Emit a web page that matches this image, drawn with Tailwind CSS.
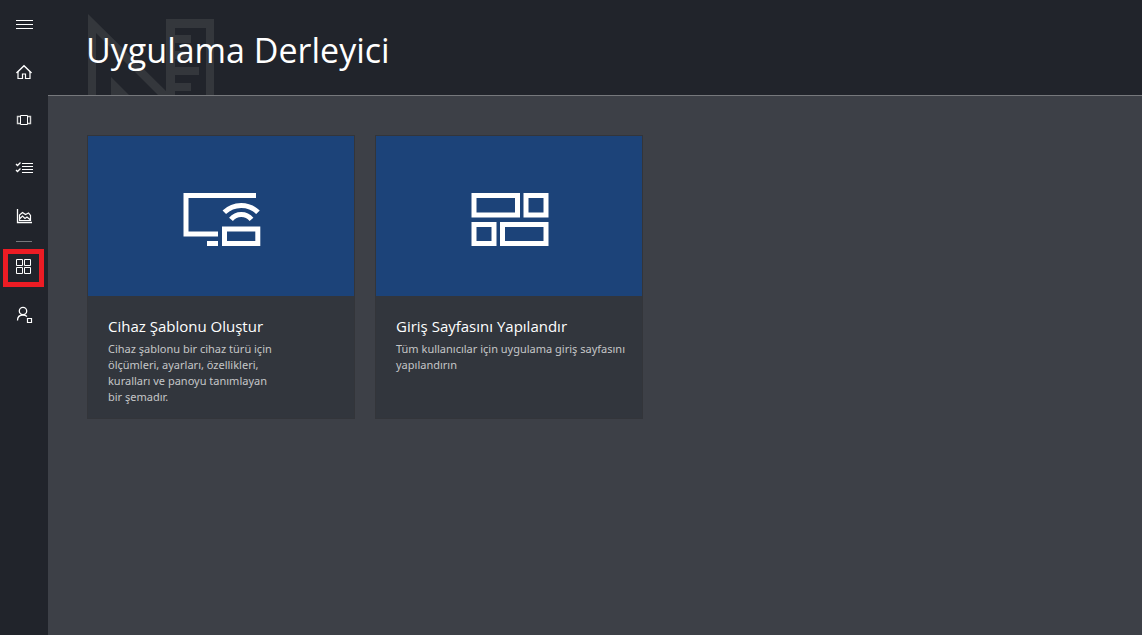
<!DOCTYPE html>
<html lang="tr">
<head>
<meta charset="utf-8">
<meta name="viewport" content="width=device-width, initial-scale=1">
<title>Uygulama Derleyici</title>
<script src="https://cdn.jsdelivr.net/npm/@tailwindcss/browser@4"></script>
</head>
<body class="flex min-h-screen bg-[#3d4047] font-['Open_Sans',sans-serif] text-white">
  <nav class="flex w-12 shrink-0 flex-col bg-[#21242b]" aria-label="Ana menü">
    <button type="button" aria-label="Menü" class="flex h-12 w-full items-center justify-center">
      <svg class="size-6" viewBox="0 0 24 24" fill="none" stroke="currentColor"><path d="M4 8.500h17M4 12.500h17M4 16.500h17"/></svg>
    </button>
    <a href="#" aria-label="Giriş" class="flex h-12 w-full items-center justify-center">
      <svg class="size-6" viewBox="0 0 24 24" fill="none" stroke="currentColor"><path d="M4.500 13 12 5.700l7.500 7.300" stroke-width="1.500"/><path d="M6 11.500v7h4.500v-4.500h3v4.500H18v-7" stroke-width="1.200"/></svg>
    </a>
    <a href="#" aria-label="Cihazlar" class="flex h-12 w-full items-center justify-center">
      <svg class="size-6" viewBox="0 0 24 24" fill="none" stroke="currentColor"><path d="M8.500 7.500h7v9h-7z"/><path d="M8 8.500H5.500v7H8M16 8.500h2.500v7H16" stroke="#d5d5d5" stroke-width="1.400"/></svg>
    </a>
    <a href="#" aria-label="Kurallar" class="flex h-12 w-full items-center justify-center">
      <svg class="size-6" viewBox="0 0 24 24" fill="none" stroke="currentColor"><path d="M10 7.500h11M10 10.500h11M10 13.500h11M10 16.500h11"/><path d="M4 8l1.500 1.500L8.500 6.500M4 14l1.500 1.500L8.500 12.500" stroke-width="1.300"/></svg>
    </a>
    <a href="#" aria-label="Analiz" class="flex h-12 w-full items-center justify-center">
      <svg class="size-6" viewBox="0 0 24 24" fill="none" stroke="currentColor"><path d="M5.500 5v13.500H20" stroke-width="1.300"/><path d="M7.500 16.500v-5.500l3-2.500 3 2 3-1.500 2 2.500v5zM7.500 15l3-3 2.500 2.500 2-1.500 3.500 3" stroke-width="1.200"/></svg>
    </a>
    <div class="flex h-[3px] items-center px-4"><div class="h-px w-full bg-[#76787c]"></div></div>
    <a href="#" aria-label="Uygulama Derleyici" aria-current="page" class="relative flex h-12 w-full items-center justify-center">
      <svg class="size-6" viewBox="0 0 24 24" fill="none" stroke="currentColor"><path d="M4.500 4.500h6v6h-6zM12.500 4.500h6v6h-6zM4.500 12.500h6v6h-6zM12.500 12.500h6v6h-6z"/></svg>
      <span class="absolute top-1.5 left-[3px] h-[38px] w-[41px] border-5 border-[#ed1c24]"></span>
    </a>
    <a href="#" aria-label="Yönetim" class="flex h-12 w-full items-center justify-center">
      <svg class="size-6" viewBox="0 0 24 24" fill="none" stroke="currentColor"><circle cx="11" cy="8" r="3.700" stroke-width="1.300"/><path d="M5.500 17.500c0-3.300 2.200-5.500 5.500-5.500 1.600 0 3 .5 4 1.500" stroke-width="1.300"/><path d="M15.500 15.500h4v4h-4z" stroke-width="1.200"/></svg>
    </a>
  </nav>
  <div class="flex min-w-0 grow flex-col">
    <header class="relative h-24 border-b border-[#76787c] bg-[#21242b] px-[38px] pt-5">
      <svg class="absolute bottom-0 left-10 h-[81px] w-[127px]" viewBox="0 0 127 81" fill="#34373c" aria-hidden="true">
        <path fill-rule="evenodd" d="M0 0 78 77V5h48v76H118V14H87v7h16v8H87v8h16v8H87v8h24v8H87v8h16v8H87v4H70L8 19v62H0z"/>
        <path d="M23 63v18h18z"/>
      </svg>
      <h1 class="relative text-[34px] leading-[60px]">Uygulama Derleyici</h1>
    </header>
    <main class="flex flex-wrap items-stretch gap-5 px-[39px] py-[39px]">
      <a href="#" class="flex w-[268px] flex-col border border-[#33353a] bg-[#32363d]">
        <div class="flex h-40 items-center justify-center bg-[#1c4379] pt-2">
          <svg class="h-[54px] w-20" viewBox="0 0 80 54" fill="none" stroke="#fff" stroke-width="5"><path d="M75 2.500H5v38.500H37M26 50.500h11M43.500 36h33.300v14.500H43.500zM43.300 19.300A24 24 0 0 1 77 19.300M50 26.300A13.400 13.400 0 0 1 70.500 26.300"/></svg>
        </div>
        <div class="pt-5 pr-3 pb-[13px] pl-5">
          <h2 class="text-[15px] leading-5">Cihaz Şablonu Oluştur</h2>
          <p class="mt-[5px] font-['Noto_Sans',sans-serif] text-[11px] leading-4 text-[#c5c6c8]">Cihaz şablonu bir cihaz türü için<br>ölçümleri, ayarları, özellikleri,<br>kuralları ve panoyu tanımlayan<br>bir şemadır.</p>
        </div>
      </a>
      <a href="#" class="flex w-[268px] flex-col border border-[#33353a] bg-[#32363d]">
        <div class="flex h-40 items-center justify-center bg-[#1c4379] pt-2">
          <svg class="h-[54px] w-20" viewBox="0 0 80 54" fill="none" stroke="#fff" stroke-width="5"><path d="M5 2.500h43.500v19.500H5zM57 2.500h20v19.500H57zM5 31.500h20v19H5zM33.500 31.500H77v19H33.500z"/></svg>
        </div>
        <div class="pt-5 pr-3 pb-[13px] pl-5">
          <h2 class="text-[15px] leading-5">Giriş Sayfasını Yapılandır</h2>
          <p class="mt-[5px] font-['Noto_Sans',sans-serif] text-[11px] leading-4 text-[#c5c6c8]">Tüm kullanıcılar için uygulama giriş sayfasını<br>yapılandırın</p>
        </div>
      </a>
    </main>
  </div>
</body>
</html>
